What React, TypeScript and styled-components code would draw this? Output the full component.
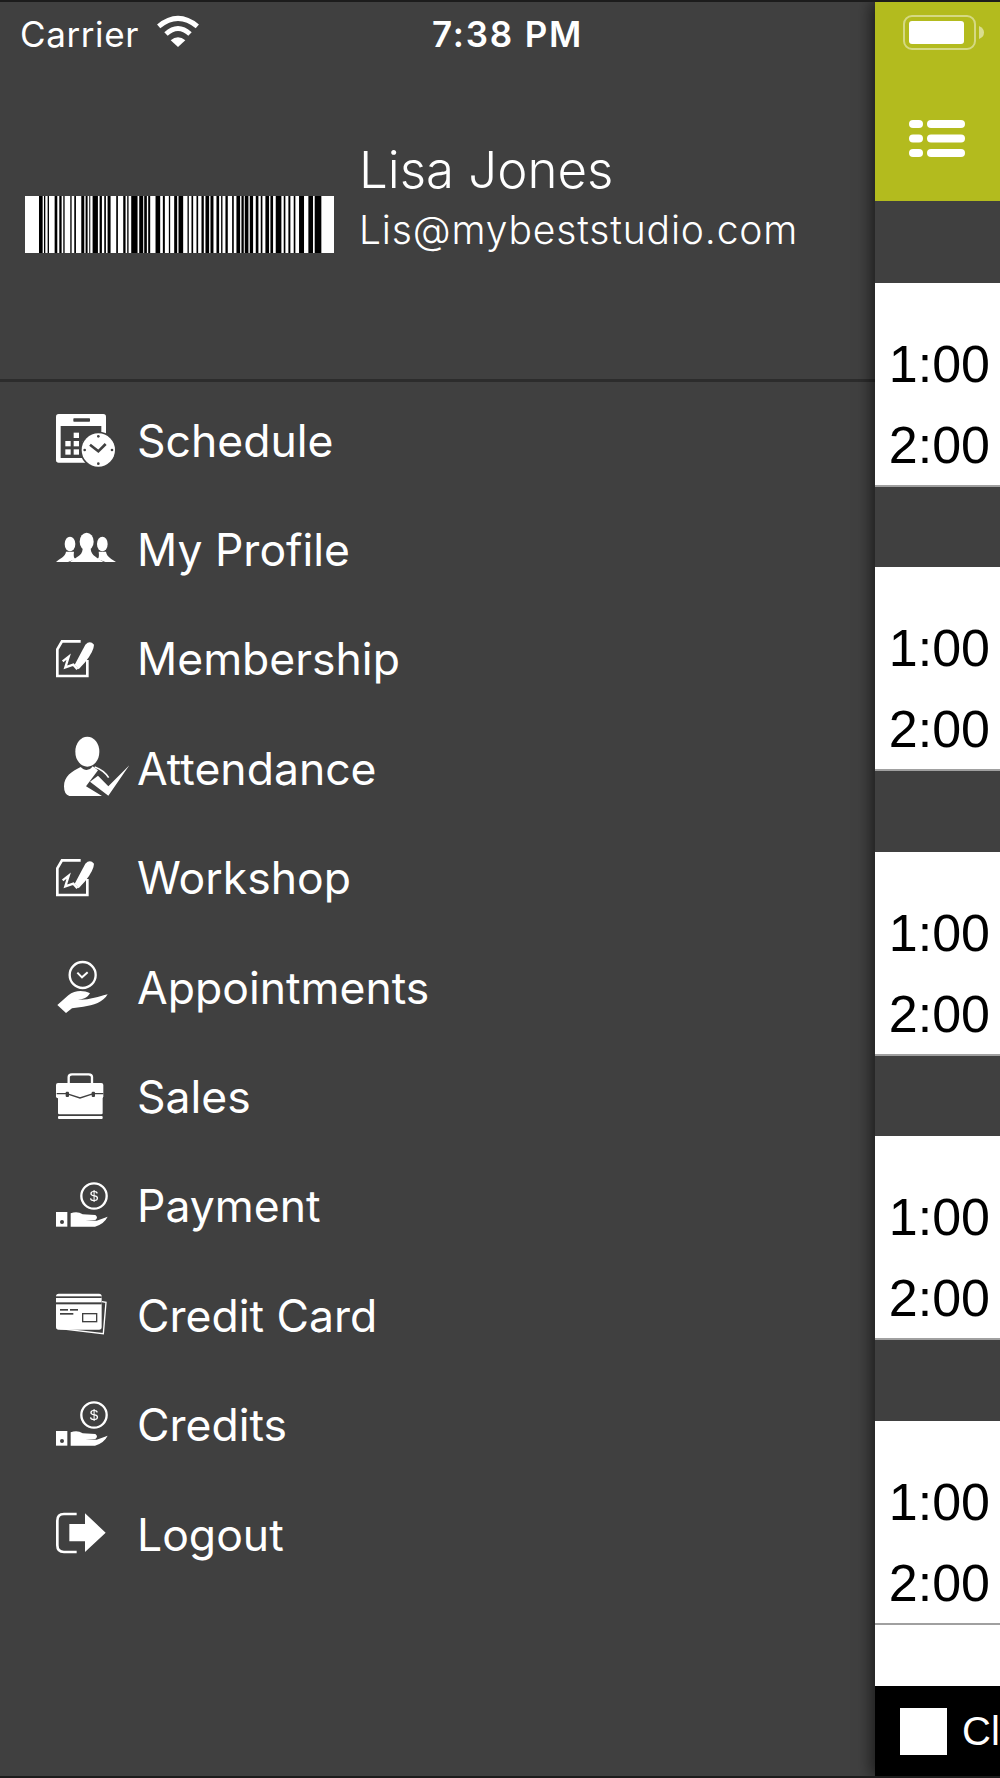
import styled, { createGlobalStyle } from 'styled-components';

const DARK = '#404040';

const GlobalStyle = createGlobalStyle`
  html, body {
    margin: 0;
    padding: 0;
    background: ${DARK};
  }
`;

const Screen = styled.div`
  display: flex;
  width: 1000px;
  height: 1778px;
  box-sizing: border-box;
  border-top: 2px solid #1c1c1c;
  border-bottom: 2px solid #1c1c1c;
  overflow: hidden;
  background: ${DARK};
`;

const Drawer = styled.div`
  display: flex;
  flex-direction: column;
  width: 875px;
  flex-shrink: 0;
  color: #fff;
`;

const StatusBar = styled.div`
  display: flex;
  align-items: center;
  height: 64px;
  padding-left: 20px;
  font-family: Inter, 'Liberation Sans', sans-serif;
`;

const Carrier = styled.span`
  font-size: 35px;
  letter-spacing: 0.6px;
  width: 136px;
`;

const WifiSvg = styled.svg`
  width: 44px;
  height: 32px;
  margin-bottom: 6px;
`;

const Clock = styled.span`
  margin-left: 232px;
  font-size: 35px;
  font-weight: 600;
  letter-spacing: 1.8px;
`;

const Profile = styled.div`
  display: flex;
  align-items: flex-end;
  height: 313px;
  box-sizing: content-box;
  padding: 0 0 0 25px;
  border-bottom: 3px solid #2c2c2c;
`;

const BarcodeSvg = styled.svg`
  display: block;
  width: 309px;
  height: 57px;
  margin-bottom: 126px;
`;

const ProfileText = styled.div`
  display: flex;
  flex-direction: column;
  margin: 0 0 122px 25px;
  font-family: Inter, 'Liberation Sans', sans-serif;
`;

const UserName = styled.span`
  font-size: 51px;
  line-height: 66px;
  font-weight: 300;
`;

const UserEmail = styled.span`
  font-size: 39px;
  letter-spacing: 0.85px;
  line-height: 54px;
  font-weight: 300;
`;

const Menu = styled.div`
  display: flex;
  flex-direction: column;
  padding: 4px 0 0 56px;
`;

const MenuRow = styled.div`
  display: flex;
  align-items: center;
  height: 109.4px;
`;

// the icons are upscaled bitmaps in the app, hence the slight softness
const MenuIcon = styled.svg`
  display: block;
  width: 82px;
  height: 70px;
  flex-shrink: 0;
  filter: blur(0.5px);
`;

const MenuLabel = styled.span`
  font-family: Inter, 'Liberation Sans', sans-serif;
  font-size: 44.5px;
  margin-left: -1px;
`;

const Panel = styled.div`
  position: relative;
  display: flex;
  flex-direction: column;
  flex: 1;
  background: ${DARK};
  box-shadow: -4px 0 14px rgba(0, 0, 0, 0.55);
`;

const PanelHeader = styled.div`
  display: flex;
  flex-direction: column;
  height: 199px;
  padding: 13px 0 0 28px;
  box-sizing: border-box;
  background: #b3bb1e;
`;

const BatterySvg = styled.svg`
  display: block;
  width: 81px;
  height: 35px;
`;

const ListSvg = styled.svg`
  display: block;
  width: 56px;
  height: 37px;
  margin: 70px 0 0 6px;
`;

const Slots = styled.div`
  display: flex;
  flex-direction: column;
  gap: 80.5px;
  padding-top: 81.5px;
`;

const Slot = styled.div`
  display: flex;
  flex-direction: column;
  align-items: flex-end;
  height: 204px;
  box-sizing: border-box;
  padding: 41px 10px 0 0;
  background: #fff;
  border-bottom: 2px solid #a0a0a0;
`;

const SlotTime = styled.span`
  font-family: 'Liberation Sans', Arial, sans-serif;
  font-size: 52px;
  line-height: 81px;
  color: #000;
`;

const PanelSpacer = styled.div`
  flex: 1;
  background: #fff;
`;

const PanelFooter = styled.div`
  display: flex;
  align-items: center;
  height: 90px;
  padding-left: 25px;
  box-sizing: border-box;
  background: #000;
  overflow: hidden;
`;

const FooterBox = styled.div`
  width: 47px;
  height: 47px;
  flex-shrink: 0;
  background: #fff;
`;

const FooterText = styled.span`
  margin-left: 15px;
  font-family: 'Liberation Sans', Arial, sans-serif;
  font-size: 40px;
  color: #fff;
`;

// white bars of the barcode, in the 3x units of the design crop
const BARCODE_WHITE: [number, number][] = [
  [15, 57], [68, 72], [76, 83], [87, 104], [112, 118], [125, 130], [134, 151], [155, 163], [168, 184],
  [193, 197], [203, 208], [211, 218], [234, 239], [246, 253], [258, 263], [272, 289], [294, 310],
  [317, 322], [326, 334], [353, 358], [370, 373], [381, 385], [391, 407], [421, 429], [435, 447],
  [451, 463], [472, 476], [490, 503], [507, 515], [520, 530], [535, 545], [552, 557], [568, 572],
  [581, 590], [598, 604], [608, 617], [624, 637], [642, 650], [661, 665], [672, 675], [686, 690],
  [700, 708], [716, 723], [728, 737], [748, 752], [760, 768], [785, 792], [797, 806], [812, 822],
  [827, 838], [853, 866], [880, 885], [905, 943],
];

const Barcode = () => (
  <BarcodeSvg viewBox="15 0 928 10" preserveAspectRatio="none">
    <rect x="15" y="0" width="928" height="10" fill="#000" />
    {BARCODE_WHITE.map(([a, b]) => (
      <rect key={a} x={a} y="0" width={b - a} height="10" fill="#fff" />
    ))}
  </BarcodeSvg>
);

const WifiIcon = () => (
  <WifiSvg viewBox="0 0 132 96">
    <path d="M8 34 Q66 -14 124 34" fill="none" stroke="#fff" strokeWidth="15" />
    <path d="M30 57 Q66 24 102 57" fill="none" stroke="#fff" strokeWidth="15" />
    <path d="M44 76 Q66 58 88 76 L66 96 Z" fill="#fff" />
  </WifiSvg>
);

const BatteryIcon = () => (
  <BatterySvg viewBox="0 0 81 35">
    <rect x="1" y="1" width="71" height="33" rx="8" fill="none" stroke="#fff" strokeOpacity="0.45" strokeWidth="2" />
    <rect x="6" y="6" width="55" height="23" rx="3" fill="#fff" />
    <path d="M76 11 Q81 13 81 17.5 Q81 22 76 24 Z" fill="#fff" fillOpacity="0.5" />
  </BatterySvg>
);

const ListIcon = () => (
  <ListSvg viewBox="0 0 56 37">
    {[0, 14.5, 29].map((y) => (
      <g key={y} fill="#fff">
        <rect x="0" y={y} width="14" height="8" rx="4" />
        <rect x="18" y={y} width="38" height="8" rx="4" />
      </g>
    ))}
  </ListSvg>
);

const Sign = ({ box }: { box: string }) => (
  <MenuIcon viewBox={box}>
    <path d="M122 6 H66 L52 30 V110 H142 V62" fill="none" stroke="#fff" strokeWidth="8" />
    <path d="M136 16 Q150 2 162 16 Q162 34 136 68 L116 90 L104 76 Z" fill="#fff" />
    <path d="M68 66 L86 52 L76 84 L100 76 L112 90" fill="none" stroke="#fff" strokeWidth="7" />
  </MenuIcon>
);

const CoinHand = ({ box }: { box: string }) => (
  <MenuIcon viewBox={box}>
    <circle cx="162" cy="50" r="38" fill="none" stroke="#fff" strokeWidth="7" />
    <text x="162" y="66" textAnchor="middle" fontSize="46" fontFamily="Liberation Sans" fill="#fff">$</text>
    <rect x="48" y="98" width="34" height="44" fill="#fff" />
    <circle cx="66" cy="128" r="6" fill={DARK} />
    <path d="M92 142 V102 Q112 94 128 105 L166 107 Q176 115 166 122 L136 123 L170 124 L203 112 Q192 134 165 142 Z" fill="#fff" />
  </MenuIcon>
);

const MENU = [
  {
    label: 'Schedule',
    icon: (
      <MenuIcon viewBox="48 18 246 210">
        <rect x="48" y="42" width="150" height="146" rx="8" fill="#fff" />
        <rect x="62" y="78" width="122" height="96" fill={DARK} />
        <rect x="100" y="55" width="50" height="10" rx="2" fill={DARK} />
        {[[101, 98], [76, 123], [101, 123], [76, 148], [101, 148], [126, 123]].map(([x, y]) => (
          <rect key={`${x}-${y}`} x={x} y={y} width="16" height="16" fill="#fff" />
        ))}
        <circle cx="175" cy="150" r="55" fill={DARK} />
        <circle cx="175" cy="150" r="50" fill="#fff" />
        <path d="M150 134 L175 154 L197 132" fill="none" stroke={DARK} strokeWidth="8" />
        <circle cx="175" cy="109" r="4" fill={DARK} />
        <circle cx="175" cy="191" r="4" fill={DARK} />
        <circle cx="134" cy="150" r="4" fill={DARK} />
        <circle cx="216" cy="150" r="4" fill={DARK} />
      </MenuIcon>
    ),
  },
  {
    label: 'My Profile',
    icon: (
      <MenuIcon viewBox="48 346 246 210">
        <ellipse cx="90" cy="433" rx="16" ry="22" fill="#fff" />
        <path d="M48 487 C60 475 76 472 78 456 L102 456 C100 470 102 476 108 478 L84 487 Z" fill="#fff" />
        <ellipse cx="187" cy="433" rx="16" ry="22" fill="#fff" />
        <path d="M228 487 C216 478 200 472 198 456 L176 456 C178 470 176 476 172 478 L196 487 Z" fill="#fff" />
        <ellipse cx="140" cy="426" rx="21" ry="27" fill="#fff" />
        <path d="M90 487 C108 472 126 470 128 448 L152 448 C154 470 174 474 190 487 Z" fill="#fff" />
      </MenuIcon>
    ),
  },
  { label: 'Membership', icon: <Sign box="48 -46 246 210" /> },
  {
    label: 'Attendance',
    icon: (
      <MenuIcon viewBox="48 283 246 210">
        <ellipse cx="142" cy="336" rx="36" ry="45" fill="#fff" />
        <path d="M72 440 C72 410 95 395 122 382 C135 396 150 392 158 380 L174 392 L138 440 L186 469 L88 469 Q72 465 72 440 Z" fill="#fff" />
        <path d="M164 382 Q192 392 206 414" fill="none" stroke="#fff" strokeWidth="5" />
        <path d="M150 426 L174 408 L205 440 L268 377 L205 468 Z" fill="#fff" />
      </MenuIcon>
    ),
  },
  { label: 'Workshop', icon: <Sign box="48 -46 246 210" /> },
  {
    label: 'Appointments',
    icon: (
      <MenuIcon viewBox="48 39 246 210">
        <circle cx="128" cy="105" r="39" fill="none" stroke="#fff" strokeWidth="7" />
        <path d="M112 98 L126 112 L143 97" fill="none" stroke="#fff" strokeWidth="6" />
        <path d="M52 195 L85 166 C105 150 130 150 150 160 C140 176 128 178 114 179 C140 182 175 170 203 163 C190 186 160 197 130 200 L96 205 L78 219 Z" fill="#fff" />
      </MenuIcon>
    ),
  },
  {
    label: 'Sales',
    icon: (
      <MenuIcon viewBox="48 367 246 210">
        <path d="M86 430 V412 Q86 404 96 404 H146 Q156 404 156 412 V430" fill="none" stroke="#fff" strokeWidth="7" />
        <rect x="48" y="430" width="142" height="46" rx="6" fill="#fff" />
        <rect x="54" y="466" width="134" height="58" rx="4" fill="#fff" />
        <rect x="54" y="529" width="134" height="9" rx="3" fill="#fff" />
        <path d="M50 462 H80 L120 475 L160 462 H190" fill="none" stroke={DARK} strokeWidth="4" />
        <rect x="77" y="456" width="10" height="16" rx="3" fill={DARK} />
        <rect x="155" y="456" width="10" height="16" rx="3" fill={DARK} />
      </MenuIcon>
    ),
  },
  { label: 'Payment', icon: <CoinHand box="48 -25 246 210" /> },
  {
    label: 'Credit Card',
    icon: (
      <MenuIcon viewBox="48 304 246 210">
        <path d="M186 366 L198 368 L190 462 L60 447" fill="none" stroke="#fff" strokeWidth="4" />
        <rect x="48" y="342" width="137" height="108" rx="8" fill="#fff" />
        <rect x="48" y="350" width="137" height="5" fill={DARK} />
        <rect x="48" y="368" width="137" height="6" fill={DARK} />
        <rect x="60" y="388" width="24" height="5" fill={DARK} />
        <rect x="90" y="388" width="24" height="5" fill={DARK} />
        <rect x="60" y="400" width="40" height="5" fill={DARK} />
        <rect x="128" y="402" width="42" height="24" fill="none" stroke={DARK} strokeWidth="4" />
      </MenuIcon>
    ),
  },
  { label: 'Credits', icon: <CoinHand box="48 -25 246 210" /> },
  {
    label: 'Logout',
    icon: (
      <MenuIcon viewBox="48 960 246 210">
        <path d="M110 1002 H72 Q52 1002 52 1022 V1096 Q52 1116 72 1116 H110" fill="none" stroke="#fff" strokeWidth="8" />
        <path d="M88 1032 H135 V1000 L197 1058 L135 1116 V1084 H88 Z" fill="#fff" />
      </MenuIcon>
    ),
  },
];

const App = () => (
  <Screen>
    <GlobalStyle />
    <Drawer>
      <StatusBar>
        <Carrier>Carrier</Carrier>
        <WifiIcon />
        <Clock>7:38 PM</Clock>
      </StatusBar>
      <Profile>
        <Barcode />
        <ProfileText>
          <UserName>Lisa Jones</UserName>
          <UserEmail>Lis@mybeststudio.com</UserEmail>
        </ProfileText>
      </Profile>
      <Menu>
        {MENU.map((item) => (
          <MenuRow key={item.label}>
            {item.icon}
            <MenuLabel>{item.label}</MenuLabel>
          </MenuRow>
        ))}
      </Menu>
    </Drawer>
    <Panel>
      <PanelHeader>
        <BatteryIcon />
        <ListIcon />
      </PanelHeader>
      <Slots>
        {[0, 1, 2, 3, 4].map((n) => (
          <Slot key={n}>
            <SlotTime>1:00</SlotTime>
            <SlotTime>2:00</SlotTime>
          </Slot>
        ))}
      </Slots>
      <PanelSpacer />
      <PanelFooter>
        <FooterBox />
        <FooterText>Cl</FooterText>
      </PanelFooter>
    </Panel>
  </Screen>
);

export default App;
